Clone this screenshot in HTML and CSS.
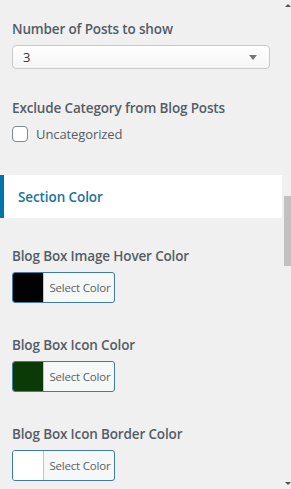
FILE: index.html
```html
<!DOCTYPE html>
<html lang="en">
<head>
<meta charset="UTF-8">
<title>Customizer</title>
<link rel="stylesheet" href="styles.css">
</head>
<body>
<div class="panel">
  <div class="controls">
    <div class="control first">
      <label class="ctl-title">Number of Posts to show</label>
      <div class="select">
        <span>3</span>
        <span class="caret"></span>
      </div>
    </div>

    <div class="control">
      <label class="ctl-title">Exclude Category from Blog Posts</label>
      <label class="check"><span class="box"></span>Uncategorized</label>
    </div>

    <div class="section-head">Section Color</div>

    <div class="control color">
      <label class="ctl-title">Blog Box Image Hover Color</label>
      <button class="picker"><span class="swatch" style="background:#020203"></span><span class="pick-txt">Select Color</span></button>
    </div>

    <div class="control color">
      <label class="ctl-title">Blog Box Icon Color</label>
      <button class="picker"><span class="swatch" style="background:#0b3a06"></span><span class="pick-txt">Select Color</span></button>
    </div>

    <div class="control color">
      <label class="ctl-title">Blog Box Icon Border Color</label>
      <button class="picker"><span class="swatch" style="background:#ffffff"></span><span class="pick-txt">Select Color</span></button>
    </div>
  </div>

  <div class="scrollbar">
    <span class="arrow up"></span>
    <div class="track"><div class="thumb"></div></div>
    <span class="arrow down"></span>
  </div>
</div>
</body>
</html>
```

FILE: styles.css
```css
body {margin:0; background:#f0f0f0; font-family:'Open Sans', 'Noto Sans', sans-serif; color:#555d66;}
.panel {display:flex; height:489px; overflow:hidden;}
.controls {flex:1; display:flex; flex-direction:column;}
.scrollbar {width:7px; display:flex; flex-direction:column; align-items:center; padding:4px 0;}
.track {flex:1; padding-top:189px;}
.thumb {width:7px; height:70px; background:#c1c1c1;}
.arrow {width:0; height:0; border-left:3px solid transparent; border-right:3px solid transparent;}
.arrow.up {border-bottom:3px solid #505050;}
.arrow.down {border-top:3px solid #505050;}

.control {padding:0 12px;}
.control.first {padding-top:19px;}
.ctl-title {display:block; font-size:13.5px; font-weight:600; line-height:20px; letter-spacing:-0.15px;}

.select {margin-top:6px; height:22px; margin-right:2px; border:1px solid #c9c9c9; border-radius:4px; background:linear-gradient(#fff, #f5f5f5); display:flex; align-items:center; justify-content:space-between; padding:0 10px; font-size:13px; color:#32373c;}
.caret {width:0; height:0; border-left:4px solid transparent; border-right:4px solid transparent; border-top:5px solid #777; margin-right:2px;}

.control:nth-child(2) {margin-top:29px;}
.check {display:flex; align-items:center; gap:8px; margin-top:7px; font-size:13px; color:#555d66; letter-spacing:-0.1px;}
.box {width:14px; height:14px; border:1px solid #7e8993; border-radius:4px; background:#fff;}

.section-head {margin:32px 2px 0 0; height:43px; background:#fff; border-left:4px solid #0073aa; display:flex; align-items:center; padding-left:14px; font-size:13.5px; font-weight:600; color:#1a72a0; letter-spacing:-0.1px;}

.control.color {margin-top:32px;}
.section-head + .control.color {margin-top:28px;}
.picker {margin-top:6px; height:31px; width:103px; padding:0; border:1px solid #3f7ba3; border-radius:3px; background:#f6f7f7; display:flex; align-items:stretch; overflow:hidden; font-family:inherit; cursor:pointer;}
.swatch {width:30px; border-right:1px solid #c3c4c7;}
.pick-txt {flex:1; display:flex; align-items:center; justify-content:center; padding-left:2px; font-size:11.5px; color:#5a6168; letter-spacing:-0.2px;}
```
